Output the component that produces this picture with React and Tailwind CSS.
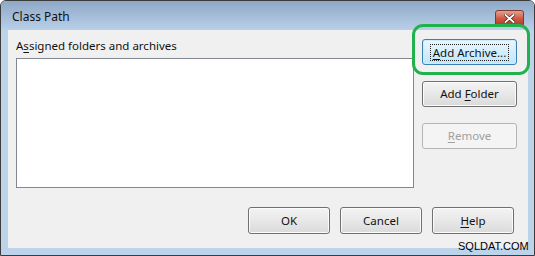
import React from 'react';

const font = { fontFamily: '"Noto Sans", "Open Sans", sans-serif' };

const Btn = ({ children, w = 'w-[82px]', h = 'h-[27px]', disabled = false, focused = false }) => {
  if (focused) {
    return (
      <button className={`${w} ${h} rounded-[3px] border border-[#3c7fb1] bg-gradient-to-b from-[#eaf6fd] to-[#bee6fd] text-[11.5px] text-[#111] flex items-center justify-center shadow-[inset_0_0_0_1px_#cfecfd]`}>
        <span className="border border-dotted border-[#222] px-[2px] leading-[15px]">{children}</span>
      </button>
    );
  }
  return (
    <button
      className={`${w} ${h} rounded-[3px] border text-[11.5px] flex items-center justify-center ${
        disabled
          ? 'border-[#b5b5b5] bg-[#f4f4f4] text-[#a0a0a0]'
          : 'border-[#707070] bg-gradient-to-b from-[#f3f3f3] via-[#e8e8e8] to-[#dadada] text-[#111] shadow-[inset_0_0_0_1px_#fbfbfb]'
      }`}
    >
      <span>{children}</span>
    </button>
  );
};

const Ul = ({ children }) => <span className="underline underline-offset-2 decoration-1">{children}</span>;

export default function App() {
  return (
    <div className="relative w-[535px] h-[256px] overflow-hidden bg-[#bcd3ea] border border-[#3c3c3c] rounded-t-[6px] flex flex-col" style={font}>
      {/* title bar */}
      <div className="h-[29px] shrink-0 flex items-start justify-between bg-gradient-to-b from-[#8ea8c7] to-[#b9d0e8]">
        <span className="pl-[11px] pt-[8px] text-[12px] leading-[16px] text-[#111]">Class Path</span>
        <div className="mt-[9px] mr-[10px] w-[29px] h-[17px] rounded-[3px] border border-[#7a3b30] bg-gradient-to-b from-[#e3a08e] via-[#cf5a44] to-[#b8321c] flex items-center justify-center">
          <svg width="11" height="9" viewBox="0 0 11 9">
            <path d="M1.5 1 L9.5 8 M9.5 1 L1.5 8" stroke="#3a1a14" strokeWidth="3" strokeLinecap="square" />
            <path d="M1.5 1 L9.5 8 M9.5 1 L1.5 8" stroke="#fff" strokeWidth="1.8" strokeLinecap="square" />
          </svg>
        </div>
      </div>

      {/* content panel */}
      <div className="ml-[7px] mr-[6px] h-[218px] bg-[#f0f0f0] flex flex-col">
        <div className="flex">
          <div className="pl-[8px] pt-[8px]">
            <div className="text-[11.5px] leading-[16px] text-[#111]">
              A<Ul>s</Ul>signed folders and archives
            </div>
            <div className="mt-[4px] w-[398px] h-[130px] bg-white border border-[#828790]" />
          </div>
          <div className="ml-[8px] pt-[9px] flex flex-col gap-[16px]">
            <Btn w="w-[95px]" h="h-[26px]" focused>
              <Ul>A</Ul>dd Archive...
            </Btn>
            <Btn w="w-[95px]" h="h-[26px]">
              Add <Ul>F</Ul>older
            </Btn>
            <Btn w="w-[95px]" h="h-[26px]" disabled>
              <Ul>R</Ul>emove
            </Btn>
          </div>
        </div>
        <div className="mt-[19px] pr-[14px] flex justify-end gap-[10px]">
          <Btn>OK</Btn>
          <Btn>Cancel</Btn>
          <Btn>
            <Ul>H</Ul>elp
          </Btn>
        </div>
      </div>

      {/* annotation highlight */}
      <div className="absolute left-[411px] top-[23px] w-[118px] h-[51px] border-[3px] border-[#23b14d] rounded-[11px]" />

      {/* watermark */}
      <div className="absolute left-[457px] top-[239px] text-[11px] leading-[12px] text-black" style={{ fontFamily: '"Liberation Sans", Arial, sans-serif' }}>
        SQLDAT.COM
      </div>
    </div>
  );
}
